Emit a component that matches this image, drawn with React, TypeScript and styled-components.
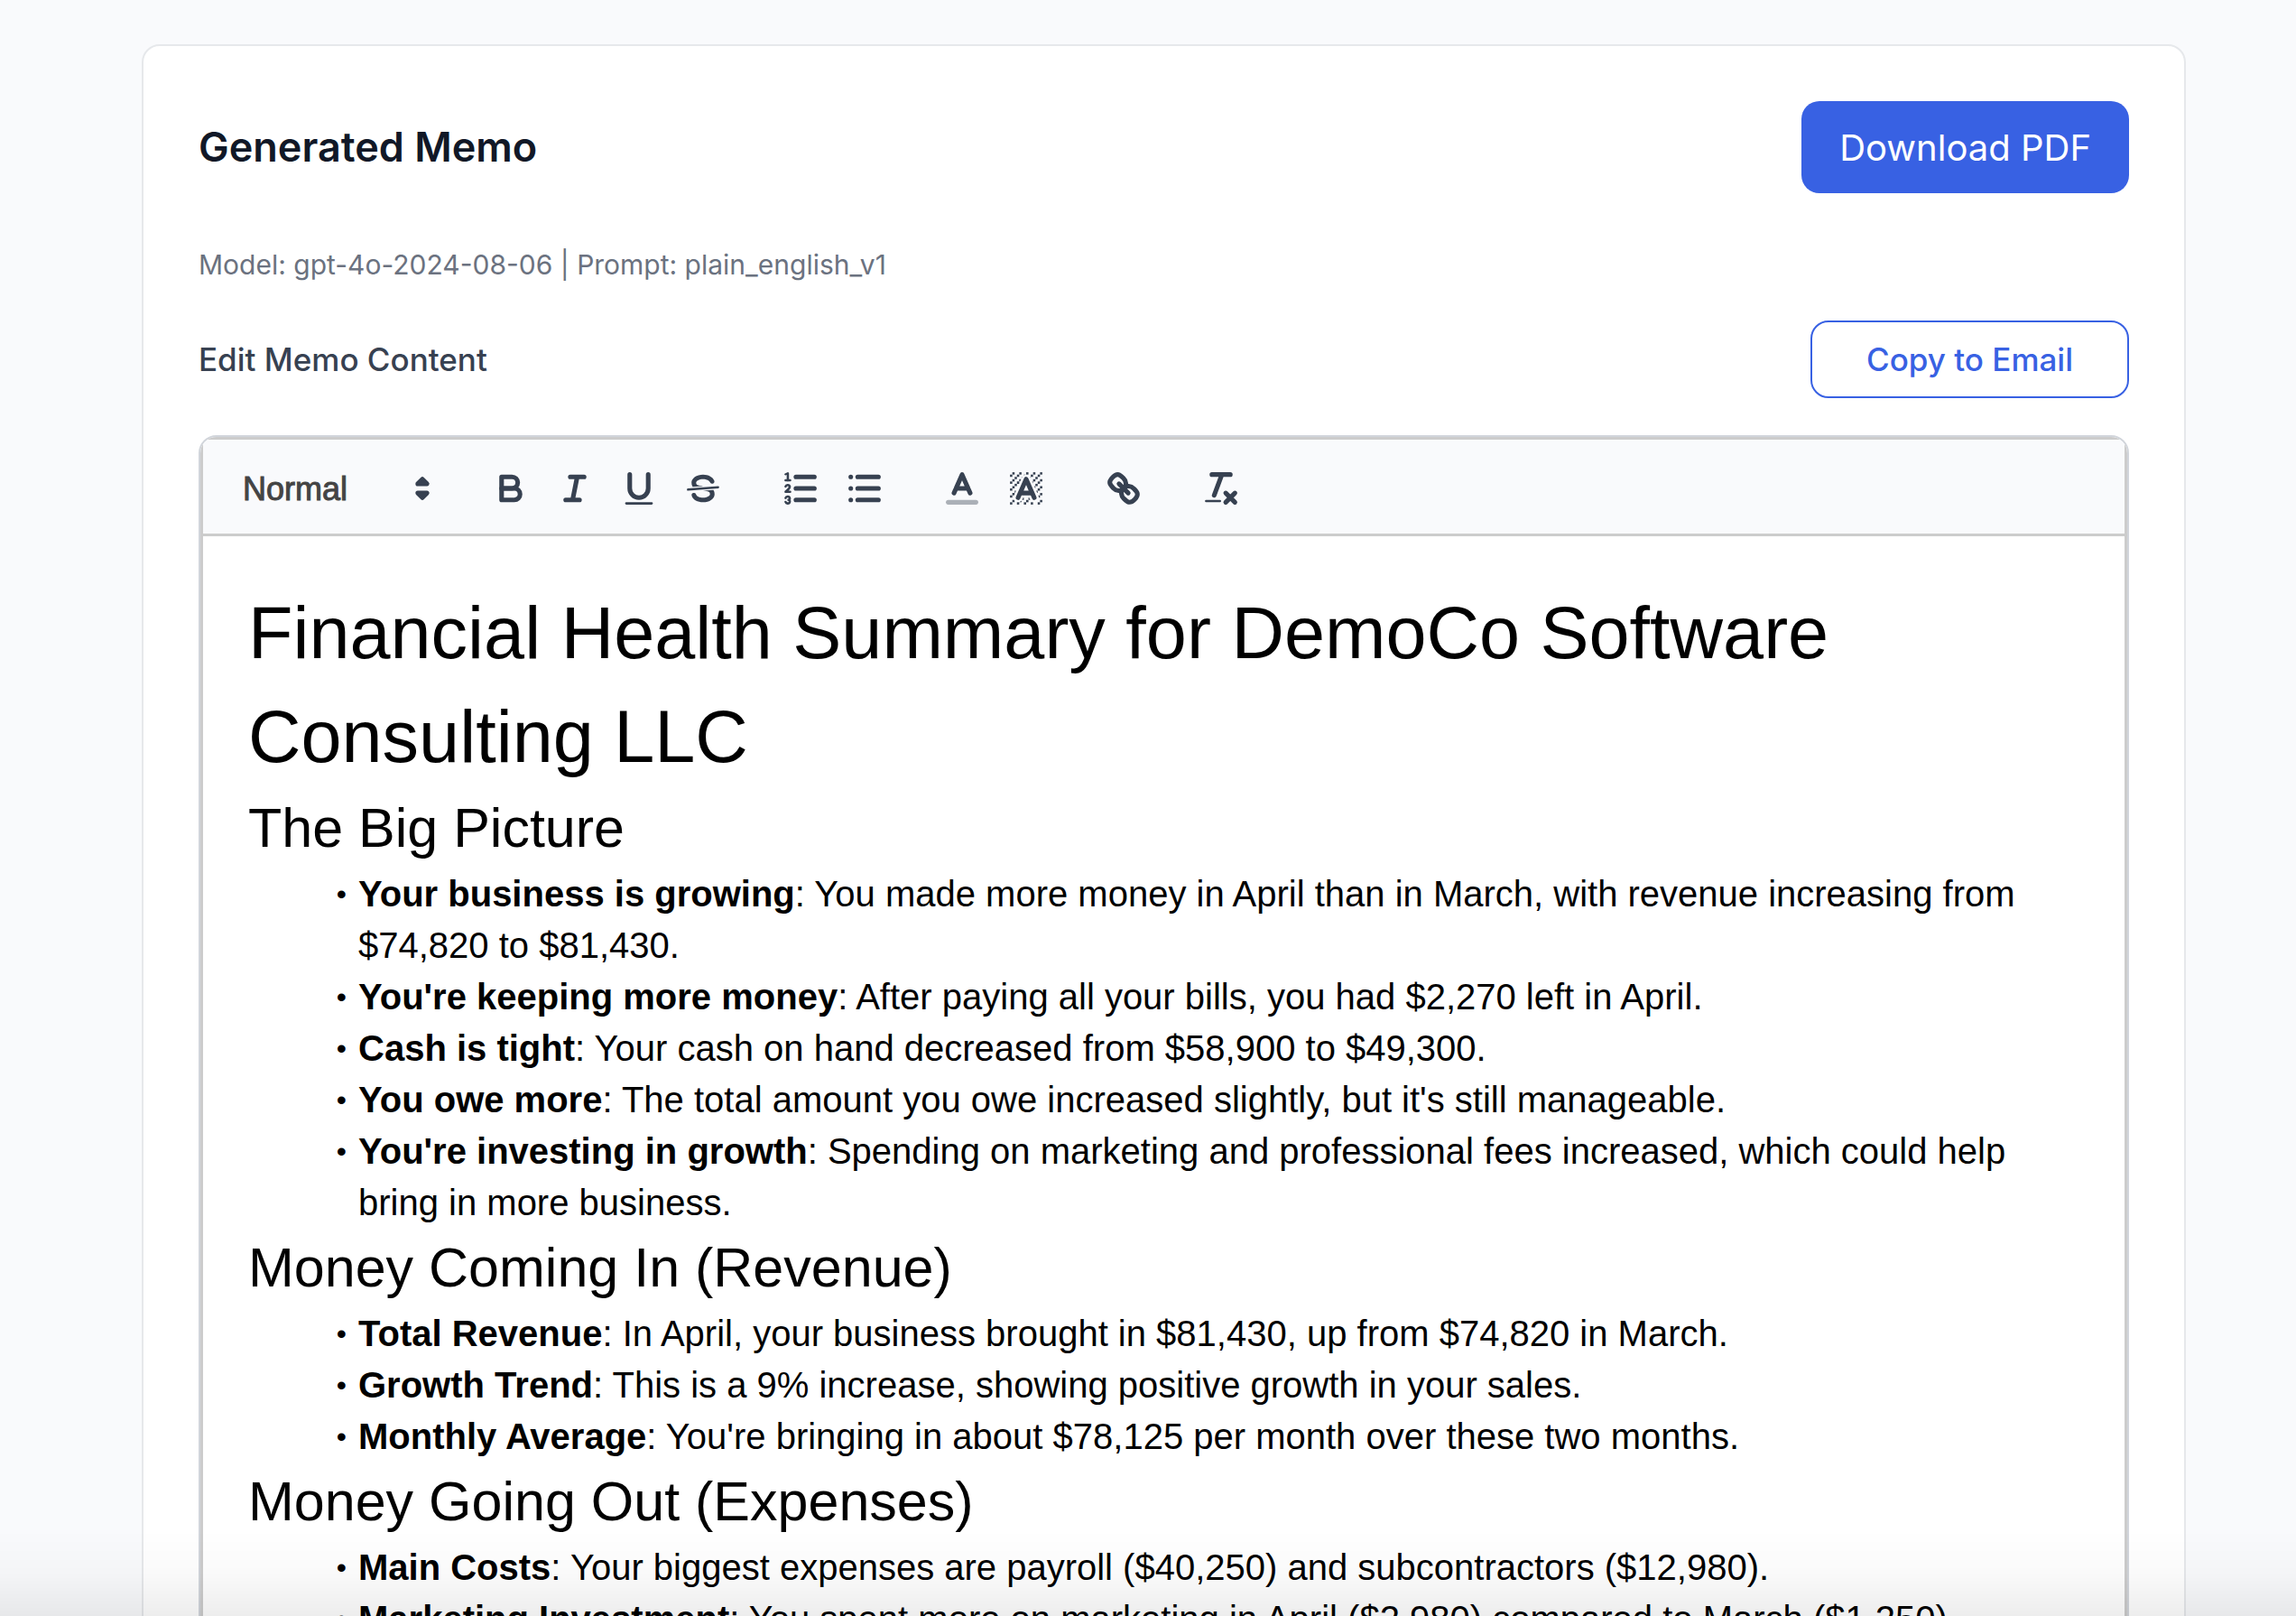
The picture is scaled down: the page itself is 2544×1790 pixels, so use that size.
import React from "react";
import styled, { createGlobalStyle } from "styled-components";

const inter = `Inter, "Open Sans", sans-serif`;
const helvetica = `"Helvetica Neue", "Liberation Sans", Arial, sans-serif`;

const GlobalStyle = createGlobalStyle`
  *, *::before, *::after { box-sizing: border-box; }
  body { margin: 0; background: #f9fafc; font-family: ${inter}; }
  h1, h2, h3, p, ul { margin: 0; padding: 0; font-weight: inherit; }
  button, select { font: inherit; margin: 0; cursor: pointer; }
`;

const Page = styled.main`
  height: 100vh;
  overflow: hidden;
  padding: 49px 122px 0 157px;
`;

const Card = styled.section`
  padding: 61px;
  background: #fff;
  border: 2px solid #e6e8eb;
  border-radius: 20px;
`;

const Row = styled.div`
  display: flex;
  align-items: center;
  justify-content: space-between;
`;

const Title = styled.h2`
  color: #111827;
  font-size: 45px;
  font-weight: 600;
  line-height: 70px;
`;

const Meta = styled.p`
  margin: 59px 0 42px;
  color: #6b7280;
  font-size: 30px;
  line-height: 40px;
`;

const FieldLabel = styled.h3`
  color: #374151;
  font-size: 35px;
  font-weight: 500;
  line-height: 50px;
`;

const PrimaryButton = styled.button`
  height: 102px;
  padding: 0 42px;
  border: 0;
  border-radius: 20px;
  background: #3861e3;
  color: #fff;
  font-size: 40px;
`;

const OutlineButton = styled.button`
  height: 86px;
  padding: 0 60px;
  border: 2px solid #3861e3;
  border-radius: 20px;
  background: #fff;
  color: #3861e3;
  font-size: 35px;
  font-weight: 500;
`;

const EditorFrame = styled.div`
  margin-top: 41px;
  overflow: hidden;
  border: 2px solid #d1d5db;
  border-radius: 20px;
`;

const Toolbar = styled.div`
  display: flex;
  gap: 37px;
  padding: 24px 20px 20px;
  background: #f9fafc;
  border: 3px solid #ccc;
`;

const ToolGroup = styled.div`
  display: flex;
`;

const Picker = styled.label`
  display: grid;
  grid-template-columns: 200px 48px;
  align-items: center;
  height: 60px;

  svg {
    grid-area: 1 / 2;
    pointer-events: none;
  }
`;

const PickerSelect = styled.select`
  grid-area: 1 / 1 / 2 / 3;
  height: 60px;
  padding: 0 24px;
  appearance: none;
  border: 0;
  background: transparent;
  color: #444;
  font-family: ${helvetica};
  font-size: 36px;
  -webkit-text-stroke: 1px #444;
`;

const ToolButton = styled.button`
  display: flex;
  align-items: center;
  justify-content: center;
  width: 71px;
  height: 60px;
  padding: 0;
  border: 0;
  background: none;
`;

const Glyph = styled.svg`
  display: block;
  width: 46px;
  height: 46px;
  fill: none;
  stroke: #374151;
  stroke-width: 2;
  stroke-linecap: round;
  stroke-linejoin: round;

  .fill {
    fill: #374151;
    stroke: none;
  }
  .solid {
    fill: #374151;
  }
  .thin {
    stroke-width: 1;
  }
  .faded {
    opacity: 0.4;
  }
`;

const Document = styled.div`
  padding: 50px;
  border: 3px solid #ccc;
  border-top: 0;
  outline: none;
  background: #fff;
  color: #000;
  font-family: ${helvetica};
  font-size: 40px;
  line-height: 57px;
`;

const DocTitle = styled.h1`
  font-size: 81px;
  line-height: 115px;
`;

const DocHeading = styled.h2`
  && {
    margin-bottom: 2px;
  }
  font-size: 61px;
  line-height: 86px;
`;

const BulletList = styled.ul`
  && {
    padding-left: 61px;
  }
  list-style: none;
`;

const Bullet = styled.li`
  padding-left: 61px;

  &::before {
    content: "•";
    display: inline-block;
    width: 48px;
    margin-left: -61px;
    margin-right: 13px;
    font-size: 32px;
    line-height: 32px;
    text-align: right;
    vertical-align: 3px;
  }
`;

const BottomShade = styled.div`
  position: fixed;
  inset: auto 0 0 0;
  height: 96px;
  pointer-events: none;
  background: linear-gradient(rgba(0, 0, 0, 0), rgba(0, 0, 0, 0.02) 50%, rgba(0, 0, 0, 0.07));
`;

const squares = [
  [4, 4], [2, 6], [3, 5], [4, 7], [2, 12], [2, 9], [2, 15], [3, 8], [12, 2], [11, 3],
  [2, 3], [6, 2], [3, 2], [5, 3], [9, 2], [15, 14], [13, 7], [15, 5], [14, 6], [15, 8],
  [14, 9], [14, 3], [15, 2], [12, 5], [13, 4], [9, 14], [8, 15], [5, 15], [11, 15],
  [14, 15], [15, 11],
];

const glyphs: Record<string, React.ReactNode> = {
  Bold: (
    <>
      <path d="M5,4H9.5A2.5,2.5,0,0,1,12,6.5v0A2.5,2.5,0,0,1,9.5,9H5V4Z" />
      <path d="M5,9h5.5A2.5,2.5,0,0,1,13,11.5v0A2.5,2.5,0,0,1,10.5,14H5V9Z" />
    </>
  ),
  Italic: <path d="M7,4H13M5,14H11M8,14L10,4" />,
  Underline: (
    <>
      <path d="M5,3V9a4.012,4.012,0,0,0,4,4H9a4.012,4.012,0,0,0,4-4V3" />
      <rect className="fill" height="1" rx="0.5" ry="0.5" width="12" x="3" y="15" />
    </>
  ),
  Strikethrough: (
    <>
      <path className="thin" d="M15.5,8.5L2.5,9.5" />
      <path
        className="fill"
        d="M9.007,8C6.542,7.791,6,7.519,6,6.5,6,5.792,7.283,5,9,5c1.571,0,2.765.679,2.969,1.309a1,1,0,0,0,1.9-.617C13.356,4.106,11.354,3,9,3,6.2,3,4,4.538,4,6.5a3.2,3.2,0,0,0,.5,1.843Z"
      />
      <path
        className="fill"
        d="M8.984,10C11.457,10.208,12,10.479,12,11.5c0,.708-1.283,1.5-3,1.5-1.571,0-2.765-.679-2.969-1.309a1,1,0,1,0-1.9.617C4.644,13.894,6.646,15,9,15c2.8,0,5-1.538,5-3.5a3.2,3.2,0,0,0-.5-1.843Z"
      />
    </>
  ),
  "Ordered list": (
    <>
      <path d="M7,4H15M7,9H15M7,14H15" />
      <path className="thin" d="M2.5,5.5H4.5" />
      <path
        className="fill"
        d="M3.5,6A0.5,0.5,0,0,1,3,5.5V3.085l-0.276.138A0.5,0.5,0,0,1,2.053,3c-0.124-.247-0.023-0.324.224-0.447l1-.5A0.5,0.5,0,0,1,4,2.5v3A0.5,0.5,0,0,1,3.5,6Z"
      />
      <path className="thin" d="M4.5,10.5h-2c0-.234,1.85-1.076,1.85-2.234A0.959,0.959,0,0,0,2.5,8.156" />
      <path
        className="thin"
        d="M2.5,14.846a0.959,0.959,0,0,0,1.85-.109A0.7,0.7,0,0,0,3.75,14a0.688,0.688,0,0,0,.6-0.736,0.959,0.959,0,0,0-1.85-.109"
      />
    </>
  ),
  "Bulleted list": <path d="M6,4H15M6,9H15M6,14H15M3,4H3.01M3,9H3.01M3,14H3.01" />,
  "Text color": (
    <>
      <path className="faded" d="M3,15H15" />
      <path d="M5.5,11L9,3L12.5,11M11.63,9H6.38" />
    </>
  ),
  "Background color": (
    <>
      <g className="fill">
        {squares.map(([x, y]) => (
          <rect key={`${x}-${y}`} x={x} y={y} width="1" height="1" />
        ))}
        <polygon points="6 6.868 6 6 5 6 5 7 5.942 7 6 6.868" />
        <polygon points="6.817 5 6 5 6 6 6.38 6 6.817 5" />
        <polygon points="4 11.439 4 11 3 11 3 12 3.755 12 4 11.439" />
        <polygon points="4.63 10 4 10 4 11 4.192 11 4.63 10" />
        <path d="M10.832,4.2L11,4.582V4H10.708A1.948,1.948,0,0,1,10.832,4.2Z" />
        <path d="M7,4.582L7.168,4.2A1.929,1.929,0,0,1,7.292,4H7V4.582Z" />
        <path d="M8,13H7.683l-0.351.8a1.933,1.933,0,0,1-.124.2H8V13Z" />
        <path d="M9,3H8V3.282A1.985,1.985,0,0,1,9,3Z" />
        <polygon points="13.447 10.174 13.808 11 14 11 14 10 13.37 10 13.447 10.174" />
        <path d="M3.775,14H3v1H4V14.314A1.97,1.97,0,0,1,3.775,14Z" />
        <polygon points="12 6.868 12 6 11.62 6 12 6.868" />
        <polygon points="12.933 9 13 9 13 8 12.495 8 12.933 9" />
        <path d="M6,14.926V15H7V14.316A1.993,1.993,0,0,1,6,14.926Z" />
        <path d="M10.668,13.8L10.317,13H10v1h.792A1.947,1.947,0,0,1,10.668,13.8Z" />
        <path d="M14.332,12.2a1.99,1.99,0,0,1,.166.8H15V12H14.245Z" />
      </g>
      <path d="M5.5,13L9,5L12.5,13M11.63,11H6.38" />
    </>
  ),
  Link: (
    <>
      <path d="M7,7L11,11" />
      <path d="M8.9,4.577a3.476,3.476,0,0,1,.36,4.679A3.476,3.476,0,0,1,4.577,8.9C3.185,7.5,2.035,6.4,4.217,4.217S7.5,3.185,8.9,4.577Z" />
      <path d="M13.423,9.1a3.476,3.476,0,0,0-4.679-.36,3.476,3.476,0,0,0,.36,4.679c1.392,1.392,2.5,2.542,4.679.36S14.815,10.5,13.423,9.1Z" />
    </>
  ),
  "Clear formatting": (
    <>
      <path d="M5,3H13M6,12L9.35,3M11,11L15,15M15,11L11,15" />
      <rect className="fill" height="1" rx="0.5" ry="0.5" width="7" x="2" y="14" />
    </>
  ),
};

const toolGroups = [
  ["Bold", "Italic", "Underline", "Strikethrough"],
  ["Ordered list", "Bulleted list"],
  ["Text color", "Background color"],
  ["Link"],
  ["Clear formatting"],
];

const sections = [
  {
    heading: "The Big Picture",
    items: [
      ["Your business is growing", "You made more money in April than in March, with revenue increasing from $74,820 to $81,430."],
      ["You're keeping more money", "After paying all your bills, you had $2,270 left in April."],
      ["Cash is tight", "Your cash on hand decreased from $58,900 to $49,300."],
      ["You owe more", "The total amount you owe increased slightly, but it's still manageable."],
      ["You're investing in growth", "Spending on marketing and professional fees increased, which could help bring in more business."],
    ],
  },
  {
    heading: "Money Coming In (Revenue)",
    items: [
      ["Total Revenue", "In April, your business brought in $81,430, up from $74,820 in March."],
      ["Growth Trend", "This is a 9% increase, showing positive growth in your sales."],
      ["Monthly Average", "You're bringing in about $78,125 per month over these two months."],
    ],
  },
  {
    heading: "Money Going Out (Expenses)",
    items: [
      ["Main Costs", "Your biggest expenses are payroll ($40,250) and subcontractors ($12,980)."],
      ["Marketing Investment", "You spent more on marketing in April ($2,980) compared to March ($1,250)."],
    ],
  },
];

export default function App() {
  return (
    <Page>
      <GlobalStyle />
      <Card>
        <Row>
          <Title>Generated Memo</Title>
          <PrimaryButton type="button">Download PDF</PrimaryButton>
        </Row>
        <Meta>Model: gpt-4o-2024-08-06 | Prompt: plain_english_v1</Meta>
        <Row>
          <FieldLabel id="memo-label">Edit Memo Content</FieldLabel>
          <OutlineButton type="button">Copy to Email</OutlineButton>
        </Row>
        <EditorFrame>
          <Toolbar role="toolbar" aria-label="Formatting">
            <Picker>
              <PickerSelect aria-label="Text style" defaultValue="Normal">
                <option>Normal</option>
              </PickerSelect>
              <Glyph viewBox="0 0 18 18" aria-hidden="true">
                <polygon className="solid" points="7 11 9 13 11 11 7 11" />
                <polygon className="solid" points="7 7 9 5 11 7 7 7" />
              </Glyph>
            </Picker>
            {toolGroups.map((group) => (
              <ToolGroup key={group[0]}>
                {group.map((name) => (
                  <ToolButton key={name} type="button" aria-label={name}>
                    <Glyph viewBox="0 0 18 18" aria-hidden="true">
                      {glyphs[name]}
                    </Glyph>
                  </ToolButton>
                ))}
              </ToolGroup>
            ))}
          </Toolbar>
          <Document
            role="textbox"
            aria-multiline="true"
            aria-labelledby="memo-label"
            contentEditable
            suppressContentEditableWarning
            spellCheck={false}
          >
            <DocTitle>Financial Health Summary for DemoCo Software Consulting LLC</DocTitle>
            {sections.map(({ heading, items }) => (
              <React.Fragment key={heading}>
                <DocHeading>{heading}</DocHeading>
                <BulletList>
                  {items.map(([term, text]) => (
                    <Bullet key={term}>
                      <strong>{term}</strong>: {text}
                    </Bullet>
                  ))}
                </BulletList>
              </React.Fragment>
            ))}
          </Document>
        </EditorFrame>
      </Card>
      <BottomShade />
    </Page>
  );
}
